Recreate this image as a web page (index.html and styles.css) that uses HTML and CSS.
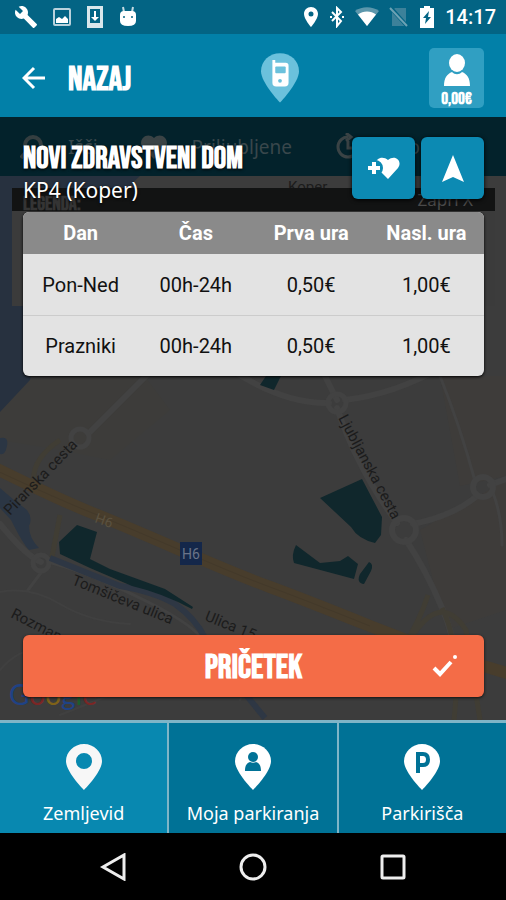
FILE: index.html
```html
<!DOCTYPE html>
<html lang="sl">
<head>
    <meta charset="UTF-8">
    <meta name="viewport" content="width=device-width, initial-scale=1">
    <title>Novi zdravstveni dom</title>
    <link rel="stylesheet" href="styles.css">
</head>
<body>

    <div class="status-bar">
        <div class="status-icons">
            <svg width="24" height="24" viewBox="0 0 24 24"><path d="M22.700 19l-9.100-9.100c.9-2.300.4-5-1.500-6.900-2-2-5-2.400-7.400-1.300L9 6 6 9 1.600 4.700C.4 7.100.9 10.100 2.900 12.100c1.900 1.900 4.600 2.400 6.900 1.500l9.100 9.100c.4.4 1 .4 1.400 0l2.300-2.300c.5-.4.5-1.100.1-1.400z" fill="#fff"/></svg>
            <svg width="20" height="20" viewBox="0 0 20 20"><rect x="2" y="2" width="16" height="16" rx="1" fill="none" stroke="#b9d2dc" stroke-width="2"/><path d="M4 16v-4l3-2 3 2 3-3 3 3v4z" fill="#fff"/></svg>
            <svg width="18" height="24" viewBox="0 0 18 24"><path d="M1 1h16v22H1zM4 4v14h10V4z" fill="#d9e7ec" fill-rule="evenodd"/><path d="M8 6h2v6h3l-4 4-4-4h3z" fill="#fff"/></svg>
            <svg width="20" height="24" viewBox="0 0 20 24"><path d="M5 2l1 5M15 2l-1 5" stroke="#c5dbe3" stroke-width="2"/><path d="M2 10q0-4 4-4h8q4 0 4 4v6q0 5-8 5t-8-5z" fill="#fff"/><circle cx="6" cy="12" r="1" fill="#036484"/><circle cx="14" cy="12" r="1" fill="#036484"/></svg>
        </div>
        <div class="status-info">
            <svg width="16" height="22" viewBox="0 0 16 22"><path d="M8 1C4 1 1 4 1 8c0 5 7 13 7 13s7-8 7-13c0-4-3-7-7-7zm0 9.500a2.500 2.500 0 1 1 0-5 2.500 2.500 0 0 1 0 5z" fill="#fff"/></svg>
            <svg width="16" height="22" viewBox="0 0 16 22"><path d="M3 6l9 9-4 5V2l4 4-9 9" fill="none" stroke="#fff" stroke-width="2"/><path d="M1 10h2v2H1zM13 10h2v2h-2z" fill="#fff"/></svg>
            <svg width="24" height="20" viewBox="0 0 24 20"><path d="M12 19L0 4c7-5 17-5 24 0z" fill="#5c97ac"/><path d="M12 19L3 7.500c5-4 13-4 18 0z" fill="#fff"/></svg>
            <svg width="20" height="22" viewBox="0 0 20 22"><path d="M6 2h11v18H3V5z" fill="#3c819a"/><path d="M1 1l17 19" stroke="#036484" stroke-width="4"/><path d="M1 2l17 18" stroke="#6da2b4" stroke-width="2"/></svg>
            <svg width="16" height="22" viewBox="0 0 16 22"><path d="M5 0h6v2h4v20H1V2h4z" fill="#fff"/><path d="M10 5l-6 7h3l-1 6 6-7H9z" fill="#036484"/></svg>
            <span class="clock">14:17</span>
        </div>
    </div>

    <header>
        <button class="back-btn" type="button">
            <svg width="24" height="24" viewBox="0 0 24 24"><path d="M23 12H2M12 2L2 12l10 10" fill="none" stroke="#fff" stroke-width="3"/></svg>
            <span>NAZAJ</span>
        </button>
        <svg class="logo" width="38" height="52" viewBox="0 0 40 52"><path d="M20 0C9 0 0 8 0 19c0 12 20 33 20 33s20-21 20-33C40 8 31 0 20 0z" fill="#6bc1dc"/><path d="M12 7h3v3h11q3 0 3 3v18q0 4-4 4H16q-4 0-4-4z" fill="#fff"/><rect x="15" y="14" width="11" height="7" rx="1" fill="#6bc1dc"/><circle cx="20" cy="29" r="2" fill="#6bc1dc"/></svg>
        <button class="account-btn" type="button">
            <svg width="28" height="33" viewBox="0 0 28 33"><ellipse cx="14" cy="9" rx="8" ry="9" fill="#fff"/><path d="M1 32c0-8 3-12 8-14 3 3 7 3 10 0 5 2 8 6 8 14z" fill="#fff"/></svg>
            <span>0,00€</span>
        </button>
    </header>

    <main>
        <div class="backdrop">
            <div class="filters">
                <span class="filter"><svg width="24" height="26" viewBox="0 0 24 26"><circle cx="13" cy="11" r="8" fill="none" stroke="#343e40" stroke-width="4"/><path d="M7 17l-6 7" stroke="#343e40" stroke-width="4"/></svg>Išči</span>
                <span class="filter"><svg width="28" height="26" viewBox="0 0 28 26"><path d="M14 25L3 14C-3 7 6-3 14 4c8-7 17 3 11 10z" fill="#3a4345"/></svg>Priljubljene</span>
                <span class="filter"><svg width="28" height="28" viewBox="0 0 28 28"><path d="M14 4a10 10 0 1 0 10 10" fill="none" stroke="#3a4345" stroke-width="3"/><path d="M14 8v7h6M12 0l5 4-5 4" fill="none" stroke="#3a4345" stroke-width="3"/></svg>Zgodo</span>
            </div>
            <div class="map-area">
                <svg class="map" viewBox="0 176 506 544" preserveAspectRatio="xMidYMid slice">
                    <rect y="176" width="506" height="544" fill="#3c3c3c"/>
                    <path d="M30 380l110-10 30 40-60 50-50-10L0 440v-30z" fill="#3d3c3a"/>
                    <path d="M440 376h66v100l-46 10zM420 530l86-50v130l-60 20z" fill="#3e3c3a"/>
                    <path d="M0 176h140L50 260l-12 70-8 50L0 412z" fill="#27313f"/>
                    <path d="M0 438q9-2 7 8t-7 8zM0 488l14 12 13 10q6 8 2 16 0 12 10 22l-10 2q-6-6-18-30l-11-12z" fill="#2b3644"/>
                    <!-- streets -->
                    <g fill="none" stroke="#424242" stroke-linecap="round">
                        <path d="M150 372L90 432M235 372q50 32 94 31M345 400q50-6 95-32M325 376l12 24M337 408q20 60 60 115M413 524q40-8 64-28M490 485l16-6M406 540q20 30 36 68t12 60M0 524q26 32 41 38" stroke-width="6"/>
                        <path d="M440 376q20 50 35 105M492 490q10 25 10 55M48 562q40 10 100 40t60 50M28 590l15-20" stroke-width="3"/>
                        <path d="M0 592q30-6 60 12t70 20M0 670q30-35 70-10M60 715l50-20M240 700q20-40 60-50" stroke="#404040" stroke-width="2"/>
                        <circle cx="80" cy="438" r="9" stroke-width="5"/>
                        <circle cx="337" cy="403" r="9" stroke-width="5"/>
                        <circle cx="404" cy="530" r="12" stroke-width="6"/>
                        <circle cx="483" cy="487" r="10" stroke-width="6"/>
                        <circle cx="41" cy="563" r="8" stroke-width="5"/>
                    </g>
                    <path d="M60 515l-8 42M60 440q-30 20-26 45M402 650q18-30 26-55M410 640q30-50 56-10l14 90M442 608q20 40 12 112" fill="none" stroke="#403d34" stroke-width="5"/>
                    <path d="M50 558l70 28q35 6 55 18 20 14 30 34t60 80" fill="none" stroke="#2e3744" stroke-width="6"/>
                    <path d="M-5 468Q60 500 90 512T180 550T270 587T370 626T510 674" fill="none" stroke="#483d2c" stroke-width="12"/>
                    <path d="M-5 470Q60 500 90 512T180 550T270 587T370 626" fill="none" stroke="#43392a" stroke-width="1"/>
                    <!-- parking zones -->
                    <g fill="#10272c">
                        <path d="M77 525l20 7-7 27 20 10 55 20 28 18-1 2q-30-16-60-23L90 568l-30-14-1-12z"/>
                        <path d="M266 376h15l-7 14-14-5z"/>
                        <path d="M320 498l42-19 20 38-1 18-6 8q-17-4-24-16z"/>
                        <path d="M296 545l24 18 20-2 8-5 10 8-4 15-60-16q-3-8 2-18zM369 562q5 2 2 9l-7 13q-8-1-4-10z"/>
                    </g>
                    <rect x="180" y="542" width="22" height="23" fill="#14274a"/>
                    <text class="map-sign" x="182" y="559">H6</text>
                    <text class="map-road" transform="translate(94 522) rotate(20)">H6</text>
                    <text class="map-label" transform="translate(10 516) rotate(-46)">Piranska cesta</text>
                    <text class="map-label" transform="translate(338 418) rotate(62)">Ljubljanska cesta</text>
                    <text class="map-label" transform="translate(71 584) rotate(22)">Tomšičeva ulica</text>
                    <text class="map-label" transform="translate(10 617) rotate(27)">Rozman</text>
                    <text class="map-label" transform="translate(204 620) rotate(22)">Ulica 15</text>
                    <text class="map-label" x="288" y="192">Koper</text>
                    <text class="map-google" x="9" y="705"><tspan fill="#1f4285">G</tspan><tspan fill="#7b2625">o</tspan><tspan fill="#7f6218">o</tspan><tspan fill="#1f4285">g</tspan><tspan fill="#1b5f2b">l</tspan><tspan fill="#7b2625">e</tspan></text>
                </svg>
                <div class="legend">
                    <div class="legend-head"><b>LEGENDA:</b><span>Zapri X</span></div>
                    <div class="legend-body"></div>
                </div>
            </div>
        </div>

        <section class="details">
            <div class="details-head">
                <div class="details-title">
                    <h1>NOVI ZDRAVSTVENI DOM</h1>
                    <p>KP4 (Koper)</p>
                </div>
                <div class="details-actions">
                    <button class="icon-btn" type="button" aria-label="Dodaj med priljubljene">
                        <svg width="32" height="26" viewBox="0 0 32 26"><path d="M20 24L9 13C4 6 13-1 20 5c7-6 15 1 10 8z" fill="#fff"/><circle cx="7" cy="13" r="8" fill="#0c8ab3"/><path d="M6 7v12M0 13h12" stroke="#fff" stroke-width="4"/></svg>
                    </button>
                    <button class="icon-btn" type="button" aria-label="Navigacija">
                        <svg width="22" height="27" viewBox="0 0 22 27"><path d="M11 0l11 27-11-5-11 5z" fill="#fff"/></svg>
                    </button>
                </div>
            </div>

            <table class="prices">
                <thead>
                    <tr><th>Dan</th><th>Čas</th><th>Prva ura</th><th>Nasl. ura</th></tr>
                </thead>
                <tbody>
                    <tr><td>Pon-Ned</td><td>00h-24h</td><td>0,50€</td><td>1,00€</td></tr>
                    <tr><td>Prazniki</td><td>00h-24h</td><td>0,50€</td><td>1,00€</td></tr>
                </tbody>
            </table>

            <button class="start-btn" type="button">
                <span>PRIČETEK</span>
                <svg width="26" height="24" viewBox="0 0 26 24"><path d="M2 14l6 6L19 8" fill="none" stroke="#fff" stroke-width="4"/><circle cx="23" cy="3" r="2" fill="#fff"/></svg>
            </button>
        </section>
    </main>

    <nav class="tabs">
        <a class="tab active" href="#">
            <svg width="36" height="46" viewBox="0 0 36 46"><path d="M18 0C8 0 0 8 0 17c0 11 18 29 18 29s18-18 18-29C36 8 28 0 18 0zm0 25a8 8 0 1 1 0-16 8 8 0 0 1 0 16z" fill="#f7f7f7"/></svg>
            Zemljevid
        </a>
        <a class="tab" href="#">
            <svg width="36" height="46" viewBox="0 0 36 46"><path d="M18 0C8 0 0 8 0 17c0 11 18 29 18 29s18-18 18-29C36 8 28 0 18 0z" fill="#fff"/><circle cx="18" cy="13" r="5" fill="#007296"/><path d="M10 27c0-6 2-8 5-9 2 1 4 1 6 0 3 1 5 3 5 9z" fill="#007296"/></svg>
            Moja parkiranja
        </a>
        <a class="tab" href="#">
            <svg width="36" height="46" viewBox="0 0 36 46"><path d="M18 0C8 0 0 8 0 17c0 11 18 29 18 29s18-18 18-29C36 8 28 0 18 0z" fill="#fff"/><path d="M14 29V10h5q5 0 5 5.500t-5 5.500h-5" fill="none" stroke="#007296" stroke-width="4"/></svg>
            Parkirišča
        </a>
    </nav>

    <div class="system-bar">
        <button type="button" aria-label="Back"><svg width="28" height="28" viewBox="0 0 28 28"><path d="M25 2v24L4 14z" fill="none" stroke="#eee" stroke-width="3"/></svg></button>
        <button type="button" aria-label="Home"><svg width="28" height="28" viewBox="0 0 28 28"><circle cx="14" cy="14" r="12" fill="none" stroke="#eee" stroke-width="3"/></svg></button>
        <button type="button" aria-label="Recent"><svg width="28" height="28" viewBox="0 0 28 28"><rect x="3" y="3" width="22" height="22" rx="1" fill="none" stroke="#eee" stroke-width="3"/></svg></button>
    </div>

</body>
</html>
```
FILE: styles.css
```css
* {
    box-sizing: border-box;
}
body {
    margin: 0;
    min-height: 100vh;
    display: flex;
    flex-direction: column;
    background: #000;
    color: #fff;
    font-family: "Noto Sans", sans-serif;
}
button {
    border: none;
    padding: 0;
    background: none;
    color: #fff;
    cursor: pointer;
}
svg {
    display: block;
    flex-shrink: 0;
}

/* status bar */
.status-bar {
    display: flex;
    justify-content: space-between;
    align-items: center;
    height: 34px;
    padding: 0 10px 0 14px;
    background: #036484;
}
.status-icons {
    display: flex;
    align-items: center;
    gap: 14px;
}
.status-info {
    display: flex;
    align-items: center;
    gap: 10px;
}
.clock {
    font: 500 20px/24px Roboto, sans-serif;
}

/* header */
header {
    display: flex;
    justify-content: space-between;
    align-items: center;
    height: 83px;
    padding: 4px 22px 0;
    background: #0280a8;
}
.back-btn {
    display: flex;
    align-items: center;
    gap: 22px;
    font: bold 34px/40px "Bebas Neue", "Roboto Condensed", "Liberation Sans Narrow", sans-serif;
}
.back-btn span {
    padding-top: 4px;
}
.account-btn {
    display: flex;
    flex-direction: column;
    align-items: center;
    justify-content: flex-end;
    gap: 3px;
    width: 55px;
    height: 60px;
    border-radius: 5px;
    background: #309fc2;
    font: bold 17px/18px "Bebas Neue", "Roboto Condensed", "Liberation Sans Narrow", sans-serif;
}

/* map with the price panel on top of it */
main {
    flex: 1;
    display: grid;
}
.backdrop,
.details {
    grid-area: 1 / 1;
    min-width: 0;
}
.backdrop {
    display: flex;
    flex-direction: column;
}
.filters {
    display: flex;
    align-items: center;
    gap: 42px;
    height: 59px;
    padding: 0 20px;
    background: #03222b;
    overflow: hidden;
}
.filter {
    display: flex;
    align-items: center;
    gap: 24px;
    color: #39474b;
    font-size: 19px;
}
.map-area {
    flex: 1;
    position: relative;
    overflow: hidden;
}
.map {
    position: absolute;
    width: 100%;
    height: 100%;
}
.map-label {
    font: 15px Roboto, sans-serif;
    fill: #1b1b1b;
}
.map-road {
    font: 14px Roboto, sans-serif;
    fill: #5a5140;
}
.map-sign {
    font: 14px Roboto, sans-serif;
    fill: #6a7488;
}
.map-google {
    font: 28px Lato, sans-serif;
}
.legend {
    position: relative;
    margin: 12px 11px 0 12px;
}
.legend-head {
    display: flex;
    justify-content: space-between;
    height: 23px;
    padding: 0 22px 0 11px;
    background: #121313;
    color: #4a4a4a;
    font-size: 17px;
    line-height: 23px;
}
.legend-head b {
    color: #343434;
    font: bold 20px/32px "Bebas Neue", "Roboto Condensed", "Liberation Sans Narrow", sans-serif;
}
.legend-body {
    height: 95px;
    background: #3b3b3b;
}

.details {
    position: relative;
    display: flex;
    flex-direction: column;
    padding: 20px 22px 23px 23px;
}
.details-head {
    display: flex;
    justify-content: space-between;
    height: 75px;
}
h1 {
    margin: 4px 0 0;
    font: bold 31px/36px "Bebas Neue", "Roboto Condensed", "Liberation Sans Narrow", sans-serif;
    white-space: nowrap;
    text-shadow: 0 1px 3px #000;
}
p {
    margin: 0;
    font-size: 21px;
    line-height: 26px;
    text-shadow: 0 1px 3px #000;
}
.details-actions {
    display: flex;
    gap: 6px;
}
.icon-btn {
    display: flex;
    align-items: center;
    justify-content: center;
    width: 63px;
    height: 62px;
    border-radius: 6px;
    background: #0c8ab3;
    box-shadow: 0 1px 4px #000;
}
.prices {
    width: 100%;
    table-layout: fixed;
    border-spacing: 0;
    border-radius: 6px;
    overflow: hidden;
    background: #e3e3e3;
    color: #111;
    font: 20px/24px Roboto, sans-serif;
    text-align: center;
    box-shadow: 0 1px 3px #000;
}
.prices th {
    height: 42px;
    padding: 0;
    background: #8a8a8a;
    color: #fff;
}
.prices td {
    height: 61px;
    padding: 0;
}
.prices tr + tr td {
    border-top: 1px solid #ccc;
}
.start-btn {
    display: grid;
    grid-template-columns: 1fr auto 1fr;
    align-items: center;
    height: 62px;
    margin-top: auto;
    padding: 0 26px;
    border-radius: 6px;
    background: #f46c47;
    font: bold 34px/40px "Bebas Neue", "Roboto Condensed", "Liberation Sans Narrow", sans-serif;
    box-shadow: 0 1px 3px #111;
}
.start-btn span {
    grid-column: 2;
    padding-top: 4px;
}
.start-btn svg {
    justify-self: end;
}

/* bottom tabs */
.tabs {
    display: grid;
    grid-template-columns: repeat(3, 1fr);
    gap: 2px;
    padding-top: 3px;
    background: #7fb5c7;
}
.tab {
    display: flex;
    flex-direction: column;
    align-items: center;
    gap: 10px;
    height: 110px;
    padding-top: 21px;
    background: #007296;
    color: #fff;
    font-size: 18px;
    line-height: 26px;
    text-decoration: none;
}
.tab.active {
    background: #0888b0;
}

.system-bar {
    display: flex;
    align-items: center;
    justify-content: center;
    gap: 112px;
    height: 67px;
    background: #000;
}
```
